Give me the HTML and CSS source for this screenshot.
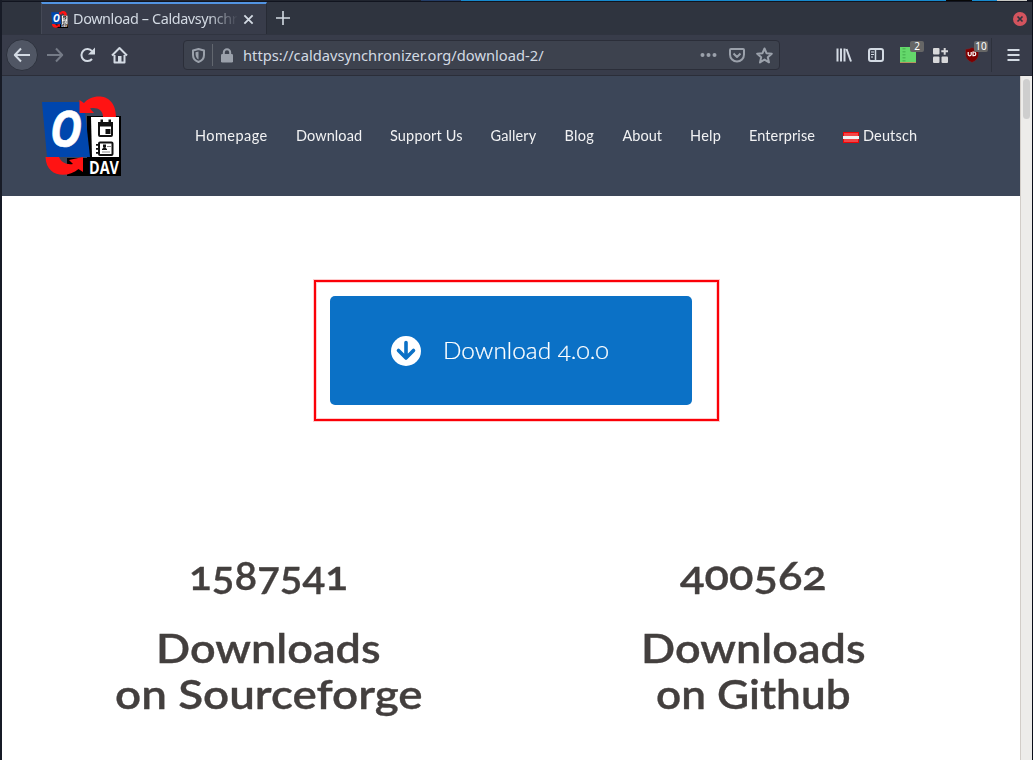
FILE: index.html
```html
<!DOCTYPE html>
<html lang="en">
<head>
<meta charset="utf-8">
<title>Download – Caldavsynchronizer</title>
<link rel="stylesheet" href="styles.css">
</head>
<body>
<svg class="defs" width="0" height="0">
  <symbol id="logo" viewBox="0 0 80 80">
    <path fill="#000" d="M46 20H80V80H26V62H46Z"/>
    <path fill="#0046ad" d="M1 6H43L49 61H6Z"/>
    <path fill="#fff" d="M50 21H78V61H51Z"/>
    <path fill="#ff1313" d="M38.500 4L43 7C51-3 75-4 75 21H62C62 14 56 11 49 12.500L53 17H38.500Z"/>
    <path fill="#ff1313" d="M4.500 61H18C20 66 25 69 32 68L28 64 42 61V76L37.500 73C26 83 5 81 4.500 61Z"/>
    <g fill="none" stroke="#111" stroke-width="2"><rect x="58" y="27" width="13" height="13" rx="1"/><rect x="58" y="46.500" width="13.500" height="12.500" rx="1"/></g>
    <path fill="#111" d="M57 26h15v4.500H57zM59.500 23.500h2.500v4h-2.500zM67.500 23.500h2.500v4h-2.500zM64.500 33h5v5h-5zM55 48h4v1.800h-4zM55 52h4v1.800h-4zM55 56h4v1.800h-4zM61 53q2.500-3 5 0v1h-5zM62 48.500h3v3h-3z"/>
    <path fill="#888" d="M66 50h4v1h-4zM61 55.500h8v1h-8z"/>
    <text class="logo-o" x="9" y="51" textLength="32" lengthAdjust="spacingAndGlyphs">O</text>
    <text class="logo-dav" x="48" y="77.500" textLength="30" lengthAdjust="spacingAndGlyphs">DAV</text>
  </symbol>
</svg>
<div class="window">
  <div class="desktop-strip"><i class="s-dark"></i><i class="s-mid"></i><i class="s-blue"></i><i class="s-black"></i><i class="s-blue2"></i><i class="s-pale"></i></div>
  <div class="tabbar">
    <div class="tab">
      <svg class="favicon" width="17" height="17"><use href="#logo"/></svg>
      <span class="tab-title">Download – Caldavsynchr</span>
      <svg width="12" height="12" viewBox="0 0 12 12"><path class="line" d="M1.500 1.500l9 9M10.500 1.500l-9 9"/></svg>
    </div>
    <svg class="plus" width="14" height="14" viewBox="0 0 14 14"><path class="line thin" d="M7 0v14M0 7h14"/></svg>
    <svg class="close" width="14" height="14" viewBox="0 0 14 14"><circle cx="7" cy="7" r="7" fill="#d3545e"/><path d="M4.500 4.500l5 5m0-5l-5 5" stroke="#2f343f" stroke-width="1.700"/></svg>
  </div>
  <div class="toolbar">
    <span class="back"><svg width="18" height="16" viewBox="0 0 18 16"><path class="line" d="M8 1.500L1.800 8 8 14.500M2 8h15"/></svg></span>
    <svg class="forward" width="18" height="16" viewBox="0 0 18 16"><path class="line" d="M10 1.500L16.200 8 10 14.500M16 8H1"/></svg>
    <svg class="reload" width="17" height="16" viewBox="0 0 17 16"><path class="line" d="M13 12A6 6 0 1 1 13 4.200"/><path fill="#d3dae3" d="M16 .500V7.500H9Z"/></svg>
    <svg class="home" width="17" height="17" viewBox="0 0 17 17"><path class="line" d="M1 8.500L8.500 1 16 8.500M3.500 8v7.500h10V8"/><path fill="#d3dae3" d="M7 9h3.500v7H7z"/></svg>
    <div class="urlbar">
      <svg width="13" height="15" viewBox="0 0 13 15"><path class="muted-line" d="M6.500 1L12 2.500V7Q12 12 6.500 14 1 12 1 7V2.500Z"/><path fill="#9ba1ab" d="M6.500 3.500V11.500Q3.300 10 3.500 4.300Z"/></svg>
      <i class="divider"></i>
      <svg width="12" height="15" viewBox="0 0 12 15"><rect y="6" width="12" height="8.500" rx="1.200" fill="#9ba1ab"/><path class="muted-line" d="M2.800 7V4.500a3.200 3.200 0 0 1 6.400 0V7"/></svg>
      <span class="url">https://caldavsynchronizer.org/download-2/</span>
      <svg class="dots" width="17" height="6" viewBox="0 0 17 6"><g fill="#9ba1ab"><circle cx="2.500" cy="3" r="2"/><circle cx="8.500" cy="3" r="2"/><circle cx="14.500" cy="3" r="2"/></g></svg>
      <svg class="pocket" width="16" height="15" viewBox="0 0 16 15"><path class="muted-line" d="M2 1H14Q15 1 15 2V6.500A7 7 0 0 1 1 6.500V2Q1 1 2 1ZM4.500 5.500L8 9l3.500-3.500"/></svg>
      <svg class="star" width="17" height="17" viewBox="0 0 17 17"><path class="muted-line" d="M8.500 1.500l2 4.700 5.300.500-4 3.500 1.200 5.200-4.500-2.800L4 15.400l1.200-5.200-4-3.500 5.300-.500Z"/></svg>
    </div>
    <svg class="library" width="16" height="16" viewBox="0 0 16 16"><path class="line" d="M1.500 1.500v13M5 1.500v13M8.500 1.500v13M10.500 2l4.500 12.500"/></svg>
    <svg class="sidebar" width="16" height="14" viewBox="0 0 16 14"><rect class="line" x="1" y="1" width="14" height="12" rx="2"/><path d="M7.500 1v12" stroke="#d3dae3" stroke-width="1.500"/><path d="M3 4h3M3 6.500h3M3 9h2" stroke="#d3dae3"/></svg>
    <span class="addon addon-green"><svg width="16" height="16" viewBox="0 0 16 16"><path fill="#64d86b" d="M0 0h16v15H0z"/><path fill="#b8925e" d="M0 15h16v1H0z"/><path d="M4 1v14" stroke="#4dba55" stroke-width="3" stroke-dasharray="1.500 1.500"/></svg><b class="badge">2</b></span>
    <svg class="grid" width="15" height="15" viewBox="0 0 15 15"><g fill="#d8d8da"><rect y="0" width="6.500" height="6.500" rx="1"/><rect y="8.500" width="6.500" height="6.500" rx="1"/><rect x="8.500" y="8.500" width="6.500" height="6.500" rx="1"/><path d="M10.700 0h2v2.300H15v2h-2.300v2.400h-2V4.300H8.300v-2h2.400z"/></g></svg>
    <span class="addon addon-shield"><svg width="14" height="16" viewBox="0 0 14 16"><path fill="#800000" stroke="#5a3945" stroke-width=".5" d="M7 .500Q10 2.200 13.500 2.200V7Q13.500 13 7 15.500.500 13 .500 7V2.200Q4 2.200 7 .500Z"/><path d="M3.200 5v2.600q0 1.200 1.500 1.200t1.500-1.200V5M8 5v3.700h1q1.800 0 1.800-1.800T9 5Z" fill="none" stroke="#fff" stroke-width="1.200"/></svg><b class="badge wide">10</b></span>
    <i class="menu-divider"></i>
    <svg class="menu" width="13" height="12" viewBox="0 0 13 12"><path class="line" d="M.500 1h12M.500 6h12M.500 11h12"/></svg>
  </div>
  <div class="viewport">
    <div class="page">
      <header class="site-header">
        <svg class="logo" width="80" height="80"><use href="#logo"/></svg>
        <nav class="nav">
          <a class="n-home">Homepage</a><a class="n-download">Download</a><a class="n-support">Support Us</a><a class="n-gallery">Gallery</a><a class="n-blog">Blog</a><a class="n-about">About</a><a class="n-help">Help</a><a class="n-enterprise">Enterprise</a><a class="n-deutsch"><svg width="16" height="11" viewBox="0 0 16 11"><path fill="#f00" d="M0 0h16v11H0z"/><path fill="#f77" d="M1 1h14v3H1zM1 7h14v3H1z" opacity=".6"/><path fill="#fff" d="M0 4h16v3H0z"/></svg>Deutsch</a>
        </nav>
      </header>
      <div class="highlight">
        <a class="download">
          <svg width="30" height="30" viewBox="0 0 30 30"><circle cx="15" cy="15" r="15" fill="#fff"/><path d="M15 6.500V22M7.500 14.500L15 22l7.500-7.500" fill="none" stroke="#0b71c6" stroke-width="3.600" stroke-linecap="round" stroke-linejoin="round"/></svg>
          <span>Download 4.0.0</span>
        </a>
      </div>
      <section class="stats">
        <div class="stat"><div class="count"><span class="c-left">1587541</span></div><div class="label"><span class="l-down">Downloads</span><br><span class="l-source">on Sourceforge</span></div></div>
        <div class="stat"><div class="count"><span class="c-right">400562</span></div><div class="label"><span class="l-down">Downloads</span><br><span class="l-git">on Github</span></div></div>
      </section>
    </div>
    <div class="scrollbar"><i class="thumb"></i></div>
  </div>
</div>
</body>
</html>
```
FILE: styles.css
```css
* { box-sizing: border-box; }
body { margin: 0; background: #fff; }
svg { display: block; flex: none; overflow: visible; }
i { display: block; flex: none; }
.defs { position: absolute; }
.line { fill: none; stroke: #d3dae3; stroke-width: 2; stroke-linejoin: round; }
.thin { stroke-width: 1.6; }
.muted-line { fill: none; stroke: #9ba1ab; stroke-width: 2; stroke-linejoin: round; }
.logo-o { font: italic bold 50px "Open Sans", sans-serif; fill: #fff; stroke: #fff; stroke-width: .6; }
.logo-dav { font: bold 17px "Open Sans", sans-serif; fill: #fff; }

.window { width: 1033px; height: 760px; display: flex; flex-direction: column; overflow: hidden; border-left: 2px solid #171b26; border-right: 1px solid #0a0d18; font-family: "Noto Sans", sans-serif; }
.desktop-strip { height: 2px; display: flex; flex: none; background: #11141f; }
.desktop-strip i { height: 1px; }
.s-dark { width: 419px; background: #20242e; }
.s-mid { width: 40px; background: #243e68; }
.s-blue { width: 485px; background: #1689cd; }
.s-black { width: 26px; background: #080808; }
.s-blue2 { width: 25px; background: #1689cd; }
.s-pale { width: 30px; background: #c9c9c4; }

.tabbar { height: 32px; flex: none; display: flex; align-items: center; background: #2f343f; padding: 0 5px 0 39px; }
.tab { width: 226px; height: 32px; display: flex; align-items: center; flex: none; padding: 0 12px 0 9px; background: #383c4a; border-top: 2px solid #5294e2; border-left: 1px solid #454956; border-right: 1px solid #272b35; }
.tab svg:last-child { width: 11px; height: 11px; }
.favicon { margin-top: 1px; }
.tab-title { width: 165px; margin: 0 5px; overflow: hidden; white-space: nowrap; font-size: 14.4px; letter-spacing: -.38px; line-height: 22px; color: #d3dae3; -webkit-mask-image: linear-gradient(90deg, #000 82%, transparent); mask-image: linear-gradient(90deg, #000 82%, transparent); }
.plus { margin-left: 9px; }
.close { margin-left: auto; margin-top: 2px; }

.toolbar { height: 42px; flex: none; display: flex; align-items: center; padding: 0 12px 0 4px; background: #383c4a; border-top: 1px solid #303440; border-bottom: 1px solid #2b2e39; color: #d3dae3; }
.back { width: 32px; height: 32px; display: flex; align-items: center; justify-content: center; flex: none; border-radius: 50%; border: 1px solid #2d323d; background: #505664; }
.forward { margin-left: 8px; opacity: .4; }
.reload { margin-left: 15px; }
.home { margin-left: 15px; }
.urlbar { width: 597px; height: 30px; margin-left: 55px; padding: 0 6px 0 8px; display: flex; align-items: center; flex: none; background: #3d424e; border: 1px solid #2b2e39; border-radius: 4px; }
.divider { width: 1px; height: 22px; margin: 0 8px 0 7px; background: #62676f; }
.url { margin-left: 10px; font-size: 14.7px; white-space: nowrap; }
.dots { margin-left: auto; }
.pocket { margin-left: 12px; }
.star { margin-left: 11px; }
.library { margin-left: 56px; }
.sidebar { margin-left: 16px; }
.addon { position: relative; flex: none; }
.addon-green { margin-left: 16px; }
.badge { position: absolute; left: 10px; top: -6px; width: 14px; height: 11px; border-radius: 2px; background: #666; color: #fff; font: 10px/11px "Noto Sans", sans-serif; text-align: center; }
.badge.wide { left: 9px; }
.grid { margin-left: 17px; }
.addon-shield { margin-left: 17px; }
.menu-divider { width: 1px; height: 34px; margin-left: 12px; background: #2d313c; }
.menu { margin-left: auto; }

.viewport { flex: 1; min-height: 0; display: flex; }
.page { width: 1018px; background: #fff; font-family: Lato, sans-serif; }
.scrollbar { width: 12px; background: #edecea; border-left: 1px solid #d2cdc8; padding: 3px 2px; }
.thumb { width: 7px; height: 40px; border-radius: 4px; background: #cecece; }
.site-header { height: 120px; display: flex; align-items: center; padding-left: 39px; background: #3c4658; }
.nav { margin-left: 74px; display: flex; gap: 28px; color: #fff; font-size: 14.5px; line-height: 20px; white-space: nowrap; font-weight: 400; opacity: .93; }
.n-home { width: 73px; letter-spacing: .45px; }
.n-download { width: 66px; letter-spacing: .08px; }
.n-support { width: 72.5px; letter-spacing: .15px; }
.n-gallery { width: 46px; letter-spacing: .1px; }
.n-blog { width: 30px; letter-spacing: .3px; }
.n-about { width: 39.5px; }
.n-help { width: 31px; letter-spacing: .3px; }
.n-enterprise { width: 66px; letter-spacing: .1px; }
.n-deutsch { display: flex; align-items: center; gap: 4px; letter-spacing: .15px; }
.n-deutsch svg { margin-top: 3px; }

.highlight { width: 405px; height: 141px; margin: 84px 0 0 312px; padding: 14px; border: 2px solid #fb0007; box-shadow: 0 0 0 1px rgba(251, 0, 7, .2), inset 0 0 0 1px rgba(251, 0, 7, .2); }
.download { width: 362px; height: 109px; display: flex; align-items: center; padding-left: 61px; background: #0b71c6; border-radius: 5px; color: #fff; font-size: 23px; font-weight: 300; white-space: nowrap; font-variant-numeric: oldstyle-nums; }
.download span { margin: -2px 0 0 22px; transform: scaleX(1.06); transform-origin: left; -webkit-text-stroke: .2px #fff; }
.stats { display: flex; padding-left: 24px; margin-top: 131px; color: #433f3e; font-size: 41px; line-height: 46px; font-weight: 600; text-align: center; font-variant-numeric: oldstyle-nums; -webkit-text-stroke: .35px #433f3e; }
.stat { width: 485px; }
.stats span { display: inline-block; }
.c-left { transform: scaleX(1.025); }
.c-right { transform: scaleX(1.105); }
.l-down { transform: scaleX(1.098); }
.l-source { transform: scaleX(1.116); }
.l-git { transform: scaleX(1.077); }
.label { margin-top: 27px; white-space: nowrap; }
```
